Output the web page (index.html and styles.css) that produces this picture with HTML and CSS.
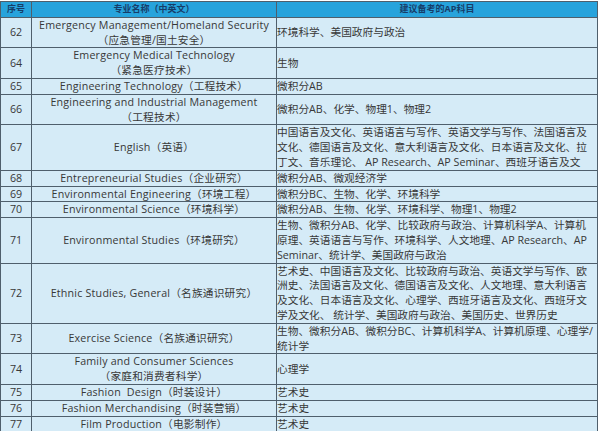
FILE: index.html
```html
<!DOCTYPE html>
<html lang="zh-CN">
<head>
<meta charset="utf-8">
<title>专业与AP科目</title>
<link rel="stylesheet" href="styles.css">
</head>
<body>
<table class="ap-table">
  <colgroup>
    <col class="c-no">
    <col class="c-major">
    <col class="c-ap">
  </colgroup>
  <thead>
    <tr>
      <th>序号</th>
      <th>专业名称（中英文）</th>
      <th>建议备考的AP科目</th>
    </tr>
  </thead>
  <tbody>
    <tr><td class="no">62</td><td class="major">Emergency Management/Homeland Security<br>（应急管理/国土安全）</td><td class="ap">环境科学、美国政府与政治</td></tr>
    <tr><td class="no">64</td><td class="major">Emergency Medical Technology<br>（紧急医疗技术）</td><td class="ap">生物</td></tr>
    <tr><td class="no">65</td><td class="major">Engineering Technology（工程技术）</td><td class="ap">微积分AB</td></tr>
    <tr><td class="no">66</td><td class="major">Engineering and Industrial Management<br>（工程技术）</td><td class="ap">微积分AB、化学、物理1、物理2</td></tr>
    <tr><td class="no">67</td><td class="major">English（英语）</td><td class="ap">中国语言及文化、英语语言与写作、英语文学与写作、法国语言及<br>文化、德国语言及文化、意大利语言及文化、日本语言及文化、拉<br>丁文、音乐理论、 AP Research、AP Seminar、西班牙语言及文</td></tr>
    <tr><td class="no">68</td><td class="major">Entrepreneurial Studies（企业研究）</td><td class="ap">微积分AB、微观经济学</td></tr>
    <tr><td class="no">69</td><td class="major">Environmental Engineering（环境工程）</td><td class="ap">微积分BC、生物、化学、环境科学</td></tr>
    <tr><td class="no">70</td><td class="major">Environmental Science（环境科学）</td><td class="ap">微积分AB、生物、化学、环境科学、物理1、物理2</td></tr>
    <tr><td class="no">71</td><td class="major">Environmental Studies（环境研究）</td><td class="ap">生物、微积分AB、化学、比较政府与政治、计算机科学A、计算机<br>原理、英语语言与写作、环境科学、人文地理、AP Research、AP<br>Seminar、统计学、美国政府与政治</td></tr>
    <tr><td class="no">72</td><td class="major">Ethnic Studies, General（名族通识研究）</td><td class="ap">艺术史、中国语言及文化、比较政府与政治、英语文学与写作、欧<br>洲史、法国语言及文化、德国语言及文化、人文地理、意大利语言<br>及文化、日本语言及文化、心理学、西班牙语言及文化、西班牙文<br>学及文化、 统计学、美国政府与政治、美国历史、世界历史</td></tr>
    <tr><td class="no">73</td><td class="major">Exercise Science（名族通识研究）</td><td class="ap">生物、微积分AB、微积分BC、计算机科学A、计算机原理、心理学/<br>统计学</td></tr>
    <tr><td class="no">74</td><td class="major">Family and Consumer Sciences<br>（家庭和消费者科学）</td><td class="ap">心理学</td></tr>
    <tr><td class="no">75</td><td class="major">Fashion&nbsp; Design（时装设计）</td><td class="ap">艺术史</td></tr>
    <tr><td class="no">76</td><td class="major">Fashion Merchandising（时装营销）</td><td class="ap">艺术史</td></tr>
    <tr><td class="no">77</td><td class="major">Film Production（电影制作）</td><td class="ap">艺术史</td></tr>
  </tbody>
</table>
</body>
</html>
```

FILE: styles.css
```css
html, body {
  margin: 0;
  padding: 0;
  background: #ffffff;
}

body {
  padding-top: 1px;
  font-family: "Open Sans", "Noto Sans CJK SC", sans-serif;
  color: #383838;
}

.ap-table {
  border-collapse: collapse;
  table-layout: fixed;
  width: 597px;
  font-size: 10.7px;
  line-height: 14.8px;
}

.c-no { width: 31px; }
.c-major { width: 245px; }
.c-ap { width: 321px; }

.ap-table th,
.ap-table td {
  border: 1px solid #4f5f6c;
  padding: 0;
  vertical-align: middle;
  white-space: nowrap;
  overflow: hidden;
}

.ap-table th {
  background: #27a3dc;
  color: #173d69;
  font-weight: bold;
  font-size: 9px;
  height: 14.8px;
  text-align: center;
}

.ap-table td {
  background: #d5ebf7;
}

.no,
.major {
  text-align: center;
}

.major {
  letter-spacing: 0.2px;
}

.ap {
  text-align: left;
  padding-left: 2px;
}
```
